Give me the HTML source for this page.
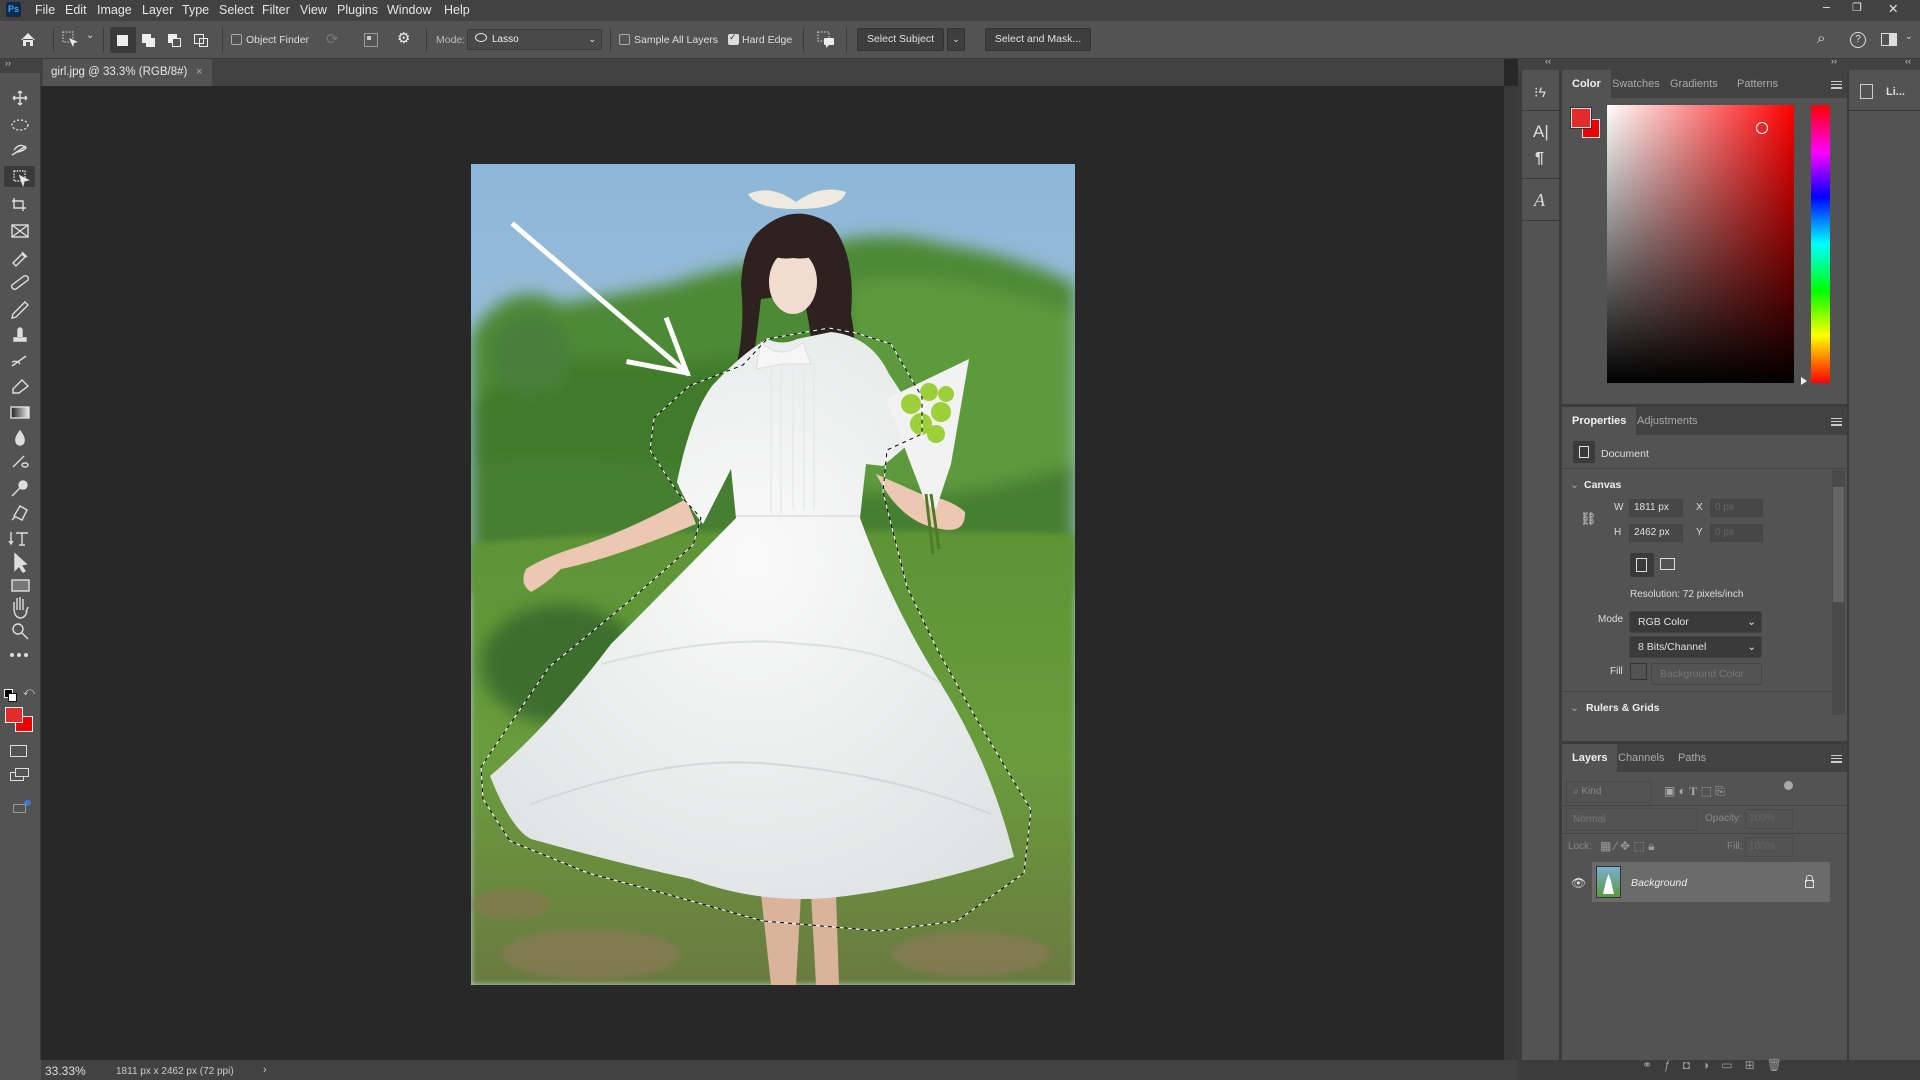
<!DOCTYPE html>
<html><head><meta charset="utf-8"><style>
*{margin:0;padding:0;box-sizing:border-box}
body{width:1920px;height:1080px;overflow:hidden;background:#282828;font-family:"Liberation Sans",sans-serif;color:#d6d6d6;position:relative}
.a{position:absolute}
.t{position:absolute;white-space:nowrap}
.menu{left:0;top:0;width:1920px;height:21px;background:#424242}
.menu span{position:absolute;top:3px;font-size:12.5px;color:#e6e6e6}
.opt{left:0;top:21px;width:1920px;height:38px;background:#535353;border-bottom:1px solid #3a3a3a}
.opt .t{font-size:10.5px;color:#ddd;top:13px}
.cb{position:absolute;width:11px;height:11px;border:1px solid #aaa;border-radius:2px;top:13px}
.btn{position:absolute;top:7px;height:23px;background:#3e3e3e;border:1px solid #333;border-radius:2px;font-size:10.5px;color:#e0e0e0;text-align:center;line-height:21px;white-space:nowrap}
.sep{position:absolute;top:7px;width:1px;height:24px;background:#3c3c3c}
.tabs{left:41px;top:59px;width:1463px;height:27px;background:#424242}
.tool{left:0;top:59px;width:41px;height:1001px;background:#535353;border-right:1px solid #3a3a3a}
.pn{background:#535353}
.ph{background:#424242;height:28px}
.ph span{position:absolute;top:8px;font-size:11px;color:#aaa}
.ph span.on{color:#f0f0f0;font-weight:bold;background:#535353;top:0;height:28px;line-height:28px;padding:0 10px}
.fld{position:absolute;height:18px;border:1px solid #444;background:#474747;font-size:10px;color:#e0e0e0;padding-left:4px;line-height:16px}
.dd{position:absolute;height:22px;border:1px solid #444;background:#3a3a3a;border-radius:2px;font-size:10.5px;color:#e0e0e0;padding-left:8px;line-height:20px}
.lab{position:absolute;font-size:10px;color:#ddd}
.ham{position:absolute;width:11px;height:8px;border-top:1px solid #ccc;border-bottom:1px solid #ccc}
.ham:after{content:"";position:absolute;left:0;top:2px;width:11px;height:2px;border-top:1px solid #ccc;border-bottom:1px solid #ccc}
</style></head><body>

<!-- menu -->
<div class="a menu">
  <div class="a" style="left:6px;top:2px;width:15px;height:15px;background:#0f2a4a;border-radius:2px;color:#31a8ff;font-size:9px;font-weight:bold;line-height:15px;text-align:center">Ps</div>
  <span style="left:35px">File</span><span style="left:65px">Edit</span><span style="left:97px">Image</span><span style="left:142px">Layer</span><span style="left:182px">Type</span><span style="left:219px">Select</span><span style="left:262px">Filter</span><span style="left:300px">View</span><span style="left:337px">Plugins</span><span style="left:387px">Window</span><span style="left:444px">Help</span>
  <span style="left:1823px;top:0">–</span><span style="left:1852px;top:1px;font-size:11px">❐</span><span style="left:1888px;top:1px">✕</span>
</div>

<!-- options -->
<div class="a opt">
  <svg class="a" style="left:20px;top:11px" width="16" height="15"><path d="M1 8 L8 1 L15 8 M3 7 V14 H6 V10 H10 V14 H13 V7" fill="#e8e8e8"/></svg>
  <div class="sep" style="left:53px"></div>
  <svg class="a" style="left:62px;top:10px" width="18" height="18"><rect x="1" y="1" width="10" height="10" fill="none" stroke="#ddd" stroke-dasharray="1.5 1.5"/><path d="M7 7 L16 11 L12 12 L11 16 Z" fill="#eee"/></svg>
  <div class="t" style="left:86px;top:9px;font-size:10px">⌄</div>
  <div class="sep" style="left:103px"></div>
  <div class="a" style="left:110px;top:6px;width:26px;height:26px;background:#3a3a3a;border-radius:2px"></div>
  <div class="a" style="left:117px;top:14px;width:11px;height:11px;background:#eee"></div>
  <div class="a" style="left:142px;top:13px;width:9px;height:9px;background:#eee"></div><div class="a" style="left:146px;top:17px;width:9px;height:9px;background:#eee"></div>
  <div class="a" style="left:168px;top:13px;width:9px;height:9px;background:#eee"></div><div class="a" style="left:172px;top:17px;width:9px;height:9px;border:1.5px solid #eee;background:#535353"></div>
  <div class="a" style="left:194px;top:13px;width:10px;height:10px;border:1.5px solid #eee"></div><div class="a" style="left:199px;top:17px;width:9px;height:9px;border:1.5px solid #eee"></div>
  <div class="sep" style="left:222px"></div>
  <div class="cb" style="left:231px"></div><div class="t" style="left:246px">Object Finder</div>
  <div class="t" style="left:326px;top:9px;font-size:15px;color:#777">⟳</div>
  <div class="a" style="left:364px;top:12px;width:14px;height:14px;border:1px solid #999;background:#555"></div>
  <div class="a" style="left:367px;top:15px;width:4px;height:4px;background:#ccc"></div>
  <div class="t" style="left:397px;top:8px;font-size:15px;color:#eee">⚙</div>
  <div class="sep" style="left:426px"></div>
  <div class="t" style="left:436px;color:#bbb">Mode:</div>
  <div class="a" style="left:467px;top:8px;width:135px;height:21px;border:1px solid #3c3c3c;background:#494949;border-radius:2px;font-size:10px;line-height:19px;padding-left:24px;color:#eee">Lasso<span style="position:absolute;right:5px;font-size:9px">⌄</span></div>
  <div class="a" style="left:475px;top:12px;width:12px;height:9px;border:1.3px solid #eee;border-radius:50%"></div>
  <div class="sep" style="left:610px"></div>
  <div class="cb" style="left:619px"></div><div class="t" style="left:634px">Sample All Layers</div>
  <div class="cb" style="left:728px;background:#ddd;border-color:#ddd"></div><div class="t" style="left:729px;top:11px;font-size:9px;color:#333">✓</div><div class="t" style="left:742px">Hard Edge</div>
  <div class="sep" style="left:803px"></div>
  <svg class="a" style="left:817px;top:10px" width="18" height="18"><rect x="1" y="1" width="11" height="9" fill="none" stroke="#ddd" stroke-dasharray="1.5 1.5"/><rect x="7" y="7" width="10" height="7" rx="1" fill="#eee"/><path d="M9 14 L9 17 L12 14Z" fill="#eee"/></svg>
  <div class="sep" style="left:846px"></div>
  <div class="btn" style="left:857px;width:87px">Select Subject</div>
  <div class="btn" style="left:947px;width:18px;font-size:9px">⌄</div>
  <div class="btn" style="left:985px;width:106px">Select and Mask...</div>
  <div class="t" style="left:1817px;top:9px;font-size:15px;color:#ddd">⌕</div>
  <div class="a" style="left:1850px;top:11px;width:16px;height:16px;border:1.4px solid #ddd;border-radius:50%;font-size:10px;text-align:center;line-height:14px;color:#ddd">?</div>
  <div class="a" style="left:1881px;top:12px;width:16px;height:13px;border:1.4px solid #ddd"></div><div class="a" style="left:1889px;top:12px;width:8px;height:13px;background:#ddd"></div>
  <div class="t" style="left:1905px;top:10px;font-size:9px">⌄</div>
</div>

<!-- tabs -->
<div class="a tabs">
  <div class="a" style="left:2px;top:0;width:169px;height:27px;background:#535353"></div>
  <div class="t" style="left:10px;top:7px;font-size:11.5px;color:#e8e8e8">girl.jpg @ 33.3% (RGB/8#)</div>
  <div class="t" style="left:155px;top:7px;font-size:11px;color:#aaa">×</div>
</div>
<div class="a" style="left:0;top:59px;width:41px;height:14px;background:#424242"></div>
<div class="t" style="left:5px;top:58px;font-size:9px;color:#ccc">››</div>

<!-- toolbar -->
<div class="a tool" style="top:73px;height:987px"></div>
<div class="a" style="left:4px;top:166px;width:31px;height:21px;background:#3a3a3a;border-radius:2px"></div>
<svg class="a" style="left:0;top:80px" width="41" height="750" fill="none" stroke="#dedede" stroke-width="1.4">
  <g transform="translate(20,18)"><path d="M0-7V7M-7 0H7M0-7l-2 2M0-7l2 2M0 7l-2-2M0 7l2-2M-7 0l2-2M-7 0l2 2M7 0l-2-2M7 0l-2 2"/></g>
  <ellipse cx="20" cy="45" rx="8" ry="5" stroke-dasharray="2 2"/>
  <path d="M12 75 L26 66 M14 70 Q20 62 26 68 Q22 72 16 72" />
  <rect x="14" y="91" width="11" height="10" stroke-dasharray="1.5 1.2"/><path d="M20 96 L28 100 L24 101 L23 105Z" fill="#eee"/>
  <path d="M14 118 V128 H26 M12 121 H23 V131"/>
  <rect x="12" y="145" width="16" height="12"/><path d="M12 145 L28 157 M28 145 L12 157"/>
  <path d="M13 183 L22 174 L25 177 L16 186 Z M22 172 L27 177"/>
  <path d="M12 205 L24 196 A3 3 0 0 1 28 200 L16 209 A3 3 0 0 1 12 205Z"/>
  <path d="M13 234 L25 222 L28 225 L16 237 L12 238Z"/>
  <path d="M14 258 H26 V261 H14Z M18 257 V250 A2 2 0 0 1 22 250 V257" fill="#ddd"/>
  <path d="M12 286 L26 276 M12 282 Q18 280 20 284"/>
  <path d="M13 309 L22 300 L28 306 L19 313 H13Z"/>
  <rect x="11" y="327" width="18" height="11" fill="url(#gr)"/>
  <path d="M20 351 Q25 358 24 361 A4 4 0 0 1 16 361 Q15 358 20 351Z" fill="#ddd"/>
  <path d="M13 387 L24 376 M22 385 A3 2 0 1 0 28 385 A3 2 0 1 0 22 385"/>
  <circle cx="23" cy="405" r="4" fill="#ddd"/><path d="M20 408 L12 416"/>
  <path d="M14 436 L20 426 L27 430 L22 440Z M12 440 L15 437"/>
  <path d="M11 452 V464 M9 461 L11 464 L13 461 M16 453 H28 M22 453 V465 M19 465 H25"/>
  <path d="M15 474 L15 490 L19 486 L23 492 L25 491 L21 485 L26 484Z" fill="#ddd"/>
  <rect x="12" y="500" width="17" height="11" fill="#777"/>
  <path d="M14 530 V522 M17 530 V518 M20 530 V517 M23 530 V519 M26 532 L28 527 M14 530 Q15 538 21 538 Q26 537 27 531"/>
  <circle cx="18" cy="549" r="5"/><path d="M22 553 L28 559"/>
  <circle cx="12" cy="575" r="1.3" fill="#ddd"/><circle cx="19" cy="575" r="1.3" fill="#ddd"/><circle cx="26" cy="575" r="1.3" fill="#ddd"/>
  <defs><linearGradient id="gr"><stop offset="0" stop-color="#222"/><stop offset="1" stop-color="#eee"/></linearGradient></defs>
</svg>
<div class="a" style="left:4px;top:689px;width:9px;height:9px;background:#000;border:1px solid #eee"></div>
<div class="a" style="left:8px;top:693px;width:9px;height:9px;background:#fff;border:1px solid #111"></div>
<div class="t" style="left:23px;top:686px;font-size:11px;color:#ddd">⤺</div>
<div class="a" style="left:15px;top:716px;width:18px;height:16px;background:#ee0000;border:1px solid #eee"></div>
<div class="a" style="left:5px;top:707px;width:18px;height:16px;background:#e22b2b;border:1px solid #eee"></div>
<div class="a" style="left:10px;top:745px;width:17px;height:12px;border:1.4px solid #ddd"></div>
<div class="a" style="left:10px;top:772px;width:14px;height:9px;border:1.4px solid #ddd"></div><div class="a" style="left:15px;top:768px;width:14px;height:9px;border:1.4px solid #ddd;background:#535353"></div>
<div class="a" style="left:24px;top:800px;width:7px;height:6px;background:#3b7bd5;border-radius:50%"></div>
<div class="a" style="left:13px;top:804px;width:13px;height:9px;border:1.4px solid #999"></div>

<!-- canvas area -->
<div class="a" style="left:41px;top:86px;width:1463px;height:974px;background:#282828"></div>
<div class="a" style="left:1504px;top:86px;width:14px;height:974px;background:#3a3a3a"></div>

<!-- image -->
<svg class="a" style="left:471px;top:164px" width="604" height="821" viewBox="0 0 604 821">
  <defs>
    <linearGradient id="sky" x1="0" y1="0" x2="0" y2="1"><stop offset="0" stop-color="#8db6d8"/><stop offset="1" stop-color="#c2d6de"/></linearGradient>
    <linearGradient id="grass" x1="0" y1="0" x2="0" y2="1"><stop offset="0" stop-color="#5d9436"/><stop offset="0.5" stop-color="#6a9c3c"/><stop offset="1" stop-color="#6b7a40"/></linearGradient>
    <radialGradient id="dr" cx="0.5" cy="0.4" r="0.7"><stop offset="0" stop-color="#fafafa"/><stop offset="1" stop-color="#dfe2e3"/></radialGradient>
    <filter id="bl"><feGaussianBlur stdDeviation="8"/></filter>
    <filter id="bl2"><feGaussianBlur stdDeviation="3"/></filter>
  </defs>
  <rect width="604" height="821" fill="url(#sky)"/>
  <g filter="url(#bl)">
    <path d="M0 170 Q40 110 90 140 Q150 130 200 120 Q260 100 330 90 Q400 60 470 80 Q540 90 604 120 V420 H0Z" fill="#4d8a36"/>
    <path d="M0 240 Q80 180 180 200 Q300 200 420 150 Q520 130 604 170 V400 H0Z" fill="#3f7a2c"/>
    <path d="M380 120 Q460 100 604 150 V330 H380Z" fill="#5d9a3e"/>
    <circle cx="60" cy="190" r="40" fill="#4a7f3a"/>
    <path d="M0 300 Q150 280 300 330 Q450 350 604 300 V430 H0Z" fill="#467f33"/>
  </g>
  <path d="M0 380 Q200 360 604 370 V821 H0Z" fill="url(#grass)" filter="url(#bl2)"/>
  <ellipse cx="90" cy="500" rx="80" ry="60" fill="#3e6e2d" filter="url(#bl)"/>
  <g filter="url(#bl2)" opacity="0.7">
    <ellipse cx="120" cy="790" rx="90" ry="25" fill="#8a7a58"/>
    <ellipse cx="500" cy="790" rx="80" ry="22" fill="#8a7a58"/>
    <ellipse cx="40" cy="740" rx="40" ry="15" fill="#86784f"/>
  </g>
  <path d="M290 730 L300 821 H325 L330 730Z M340 730 L345 821 H368 L365 730Z" fill="#d9b39a"/>
  <path d="M285 70 Q320 35 360 60 Q385 90 380 150 Q390 200 372 250 L345 230 Q340 150 330 130 L290 135 Q285 180 280 210 L262 215 Q275 170 270 120 Q272 85 285 70Z" fill="#2e2220"/>
  <ellipse cx="322" cy="118" rx="24" ry="32" fill="#f1dccf"/>
  <path d="M290 82 Q320 55 355 82 Q345 97 322 94 Q300 97 290 82Z" fill="#2e2220"/>
  <path d="M277 30 Q300 20 325 38 Q350 20 375 28 Q370 45 325 45 Q285 45 277 30Z" fill="#eeeae0"/>
  <path d="M215 335 Q150 370 100 385 Q70 395 55 405 Q48 420 60 428 Q75 420 90 405 Q140 395 225 360Z" fill="#ecc8b3"/>
  <path d="M405 310 Q430 360 470 365 Q495 370 494 348 Q480 335 450 330 Z" fill="#ecc8b3"/>
  <path d="M296 175 Q311 182 326 175 L360 168 Q400 172 418 210 Q445 250 452 268 L412 302 L395 300 L389 354 Q420 440 470 520 Q520 600 543 693 Q460 720 389 730 Q300 745 220 715 Q150 700 60 675 Q40 665 19 612 Q80 560 140 480 Q200 420 265 354 L260 305 L232 360 Q215 340 206 318 Q220 250 241 222 Q270 190 296 175Z" fill="url(#dr)"/>
  <path d="M60 640 Q200 590 300 600 Q420 610 520 650" stroke="#d4d8da" stroke-width="2" fill="none"/>
  <path d="M130 500 Q250 470 330 480 Q420 485 470 520" stroke="#dcdfe0" stroke-width="2" fill="none"/>
  <path d="M265 352 H389" stroke="#e3e3e3" stroke-width="2"/>
  <path d="M300 195 V350 M310 195 V350 M322 195 V345 M333 195 V345 M343 195 V345" stroke="#e6e8e8" stroke-width="1.2"/>
  <path d="M290 178 Q311 198 332 178 L340 200 L311 200 L285 205Z" fill="#f6f6f6" stroke="#d8d8d8" stroke-width="0.8"/>
  <path d="M415 235 L498 195 L480 300 L465 345 L455 340Z" fill="#f2f2f2"/>
  <g fill="#9ccf3a"><circle cx="440" cy="240" r="10"/><circle cx="458" cy="228" r="9"/><circle cx="470" cy="248" r="10"/><circle cx="450" cy="260" r="11"/><circle cx="465" cy="270" r="9"/><circle cx="475" cy="230" r="8"/></g>
  <path d="M455 330 L462 390 M460 330 L468 385" stroke="#4f7a2a" stroke-width="3"/>
  <path d="M43 61 L216 209 M158 198 L216 209 L196 156" stroke="#fff" stroke-width="5" fill="none" stroke-linecap="square"/>
  <path d="M358 164 L296 175 L272 201 L218 222 L183 254 L179 286 L206 328 L230 354 L222 381 L156 439 L78 503 L35 566 L10 603 L12 635 L39 677 L117 709 L195 730 L292 757 L409 767 L486 757 L553 709 L560 646 L506 556 L467 487 L436 423 L412 328 L416 286 L451 270 L451 233 L420 180 L385 169Z" fill="none" stroke="#fff" stroke-width="1"/>
  <path d="M358 164 L296 175 L272 201 L218 222 L183 254 L179 286 L206 328 L230 354 L222 381 L156 439 L78 503 L35 566 L10 603 L12 635 L39 677 L117 709 L195 730 L292 757 L409 767 L486 757 L553 709 L560 646 L506 556 L467 487 L436 423 L412 328 L416 286 L451 270 L451 233 L420 180 L385 169Z" fill="none" stroke="#000" stroke-width="1" stroke-dasharray="4 4"/>
</svg>

<!-- status bar -->
<div class="a" style="left:41px;top:1060px;width:1477px;height:20px;background:#424242"></div>
<div class="a" style="left:0;top:1060px;width:41px;height:20px;background:#535353"></div>
<div class="t" style="left:45px;top:1064px;font-size:12px;color:#ddd">33.33%</div>
<div class="t" style="left:116px;top:1066px;font-size:10px;color:#ccc">1811 px x 2462 px (72 ppi)</div>
<div class="t" style="left:263px;top:1064px;font-size:11px;color:#ccc">›</div>

<!-- right dock bg -->
<div class="a" style="left:1518px;top:59px;width:402px;height:1021px;background:#3c3c3c"></div>
<div class="a" style="left:1518px;top:59px;width:402px;height:11px;background:#424242"></div>
<div class="t" style="left:1545px;top:56px;font-size:9px;color:#ccc">‹‹</div>
<div class="t" style="left:1831px;top:56px;font-size:9px;color:#ccc">››</div>
<div class="t" style="left:1905px;top:56px;font-size:9px;color:#ccc">‹‹</div>
<div class="a pn" style="left:1522px;top:70px;width:37px;height:990px"></div>
<div class="a" style="left:1522px;top:110px;width:37px;height:1px;background:#3a3a3a"></div>
<div class="a" style="left:1522px;top:178px;width:37px;height:1px;background:#3a3a3a"></div>
<div class="a" style="left:1522px;top:220px;width:37px;height:1px;background:#3a3a3a"></div>
<div class="t" style="left:1534px;top:84px;font-size:14px;color:#ddd">⁝ϟ</div>
<div class="t" style="left:1533px;top:122px;font-size:17px;color:#ddd">A|</div>
<div class="t" style="left:1535px;top:150px;font-size:16px;color:#ddd;font-weight:bold">¶</div>
<div class="t" style="left:1534px;top:190px;font-size:18px;color:#ddd;font-style:italic;font-family:'Liberation Serif',serif">A</div>
<div class="a pn" style="left:1849px;top:70px;width:71px;height:990px"></div>
<div class="a" style="left:1849px;top:110px;width:71px;height:1px;background:#3a3a3a"></div>
<div class="a" style="left:1860px;top:84px;width:13px;height:15px;border:1.4px solid #ccc"></div>
<div class="t" style="left:1886px;top:86px;font-size:11px;color:#ddd;font-weight:bold">Li...</div>

<!-- color panel -->
<div class="a pn" style="left:1562px;top:70px;width:285px;height:334px"></div>
<div class="a ph" style="left:1562px;top:70px;width:285px">
  <span class="on" style="left:0">Color</span><span style="left:50px">Swatches</span><span style="left:108px">Gradients</span><span style="left:175px">Patterns</span>
  <div class="ham" style="left:269px;top:11px"></div>
</div>
<div class="a" style="left:1582px;top:119px;width:18px;height:19px;background:#ee0000;border:1px solid #ddd"></div>
<div class="a" style="left:1571px;top:108px;width:20px;height:20px;background:#e22b2b;border:1px solid #ddd;outline:1px solid #333"></div>
<div class="a" style="left:1607px;top:105px;width:187px;height:278px;background:linear-gradient(to bottom,rgba(0,0,0,0),#000),linear-gradient(to right,#fff,#f00)"></div>
<div class="a" style="left:1756px;top:122px;width:12px;height:12px;border:1.3px solid #fff;border-radius:50%"></div>
<div class="a" style="left:1811px;top:105px;width:19px;height:278px;background:linear-gradient(to bottom,#f00,#f0f 17%,#00f 33%,#0ff 50%,#0f0 67%,#ff0 83%,#f00)"></div>
<div class="a" style="left:1801px;top:377px;width:0;height:0;border-left:6px solid #eee;border-top:4px solid transparent;border-bottom:4px solid transparent"></div>

<!-- properties -->
<div class="a pn" style="left:1562px;top:407px;width:285px;height:334px"></div>
<div class="a ph" style="left:1562px;top:407px;width:285px">
  <span class="on" style="left:0">Properties</span><span style="left:75px">Adjustments</span>
  <div class="ham" style="left:269px;top:11px"></div>
</div>
<div class="a" style="left:1573px;top:441px;width:22px;height:22px;background:#3a3a3a;border-radius:2px"></div>
<div class="a" style="left:1579px;top:446px;width:10px;height:12px;border:1.2px solid #ddd"></div>
<div class="lab" style="left:1601px;top:448px;font-size:10.5px">Document</div>
<div class="a" style="left:1562px;top:468px;width:285px;height:1px;background:#444"></div>
<div class="a" style="left:1832px;top:470px;width:13px;height:245px;background:#4a4a4a"></div>
<div class="a" style="left:1833px;top:487px;width:11px;height:115px;background:#666"></div>
<div class="lab" style="left:1570px;top:478px;font-size:11px;color:#aaa">⌄</div>
<div class="lab" style="left:1584px;top:479px;font-weight:bold;font-size:10.5px;color:#eee">Canvas</div>
<div class="lab" style="left:1614px;top:502px">W</div><div class="fld" style="left:1629px;top:499px;width:54px">1811 px</div>
<div class="lab" style="left:1696px;top:502px">X</div><div class="fld" style="left:1710px;top:499px;width:53px;color:#666">0 px</div>
<div class="lab" style="left:1614px;top:527px">H</div><div class="fld" style="left:1629px;top:524px;width:54px">2462 px</div>
<div class="lab" style="left:1696px;top:527px">Y</div><div class="fld" style="left:1710px;top:524px;width:53px;color:#666">0 px</div>
<div class="lab" style="left:1580px;top:511px;font-size:13px">⛓</div>
<div class="a" style="left:1630px;top:553px;width:24px;height:24px;background:#3a3a3a;border-radius:2px"></div>
<div class="a" style="left:1636px;top:558px;width:11px;height:14px;border:1px solid #ddd"></div>
<div class="a" style="left:1660px;top:558px;width:15px;height:12px;border:1px solid #ddd"></div>
<div class="lab" style="left:1630px;top:589px">Resolution: 72 pixels/inch</div>
<div class="lab" style="left:1598px;top:614px">Mode</div>
<div class="dd" style="left:1629px;top:611px;width:133px">RGB Color<span style="position:absolute;right:5px">⌄</span></div>
<div class="dd" style="left:1629px;top:636px;width:133px">8 Bits/Channel<span style="position:absolute;right:5px">⌄</span></div>
<div class="lab" style="left:1610px;top:666px">Fill</div>
<div class="a" style="left:1630px;top:663px;width:17px;height:17px;border:1px solid #333;background:#535353"></div>
<div class="dd" style="left:1651px;top:663px;width:111px;background:#535353;color:#777">Background Color</div>
<div class="a" style="left:1562px;top:691px;width:270px;height:1px;background:#444"></div>
<div class="lab" style="left:1570px;top:701px;font-size:11px;color:#aaa">⌄</div>
<div class="lab" style="left:1586px;top:702px;font-weight:bold;font-size:10.5px;color:#eee">Rulers &amp; Grids</div>

<!-- layers -->
<div class="a pn" style="left:1562px;top:744px;width:285px;height:316px"></div>
<div class="a ph" style="left:1562px;top:744px;width:285px">
  <span class="on" style="left:0">Layers</span><span style="left:56px">Channels</span><span style="left:116px">Paths</span>
  <div class="ham" style="left:269px;top:11px"></div>
</div>
<div class="a" style="left:1566px;top:781px;width:86px;height:22px;border:1px solid #4a4a4a;border-radius:2px"></div>
<div class="lab" style="left:1573px;top:786px;color:#888">⌕ Kind</div>
<div class="lab" style="left:1664px;top:784px;font-size:12px;color:#aaa">▣ ◐ <b style="font-family:'Liberation Serif'">T</b> ⬚ ⎘</div>
<div class="a" style="left:1784px;top:781px;width:9px;height:9px;border-radius:50%;background:#aaa"></div>
<div class="a" style="left:1562px;top:805px;width:285px;height:1px;background:#444"></div>
<div class="a" style="left:1566px;top:808px;width:132px;height:23px;border:1px solid #4a4a4a;border-radius:2px"></div>
<div class="lab" style="left:1573px;top:814px;color:#777">Normal</div>
<div class="lab" style="left:1705px;top:813px;color:#888">Opacity:</div>
<div class="a" style="left:1745px;top:809px;width:48px;height:20px;border:1px solid #4a4a4a"></div><div class="lab" style="left:1749px;top:813px;color:#666">100%</div>
<div class="a" style="left:1562px;top:833px;width:285px;height:1px;background:#444"></div>
<div class="lab" style="left:1568px;top:841px;color:#888">Lock:</div>
<div class="lab" style="left:1600px;top:839px;font-size:12px;color:#999">▦  ⁄  ✥  ⬚  🔒︎</div>
<div class="lab" style="left:1727px;top:841px;color:#888">Fill:</div>
<div class="a" style="left:1745px;top:837px;width:48px;height:20px;border:1px solid #4a4a4a"></div><div class="lab" style="left:1749px;top:841px;color:#666">100%</div>
<div class="a" style="left:1592px;top:862px;width:238px;height:40px;background:#6b6b6b"></div>
<div class="lab" style="left:1571px;top:876px;font-size:12px;color:#ddd">👁︎</div>
<div class="a" style="left:1596px;top:866px;width:25px;height:32px;background:linear-gradient(#7ab0d0,#5a9a40);border:1px solid #333"></div>
<div class="a" style="left:1603px;top:874px;width:11px;height:20px;background:#fff;clip-path:polygon(50% 0,70% 30%,100% 100%,0 100%,30% 30%)"></div>
<div class="lab" style="left:1631px;top:877px;font-style:italic;font-size:10.5px;color:#eee">Background</div>
<div class="a" style="left:1805px;top:880px;width:9px;height:8px;border:1.3px solid #ddd"></div>
<div class="a" style="left:1806px;top:875px;width:7px;height:7px;border:1.3px solid #ddd;border-bottom:none;border-radius:3px 3px 0 0"></div>
<div class="lab" style="left:1642px;top:1058px;font-size:12px;color:#999;letter-spacing:12px">⚭ƒ◘◑▭⊞🗑︎</div>
</body></html>
